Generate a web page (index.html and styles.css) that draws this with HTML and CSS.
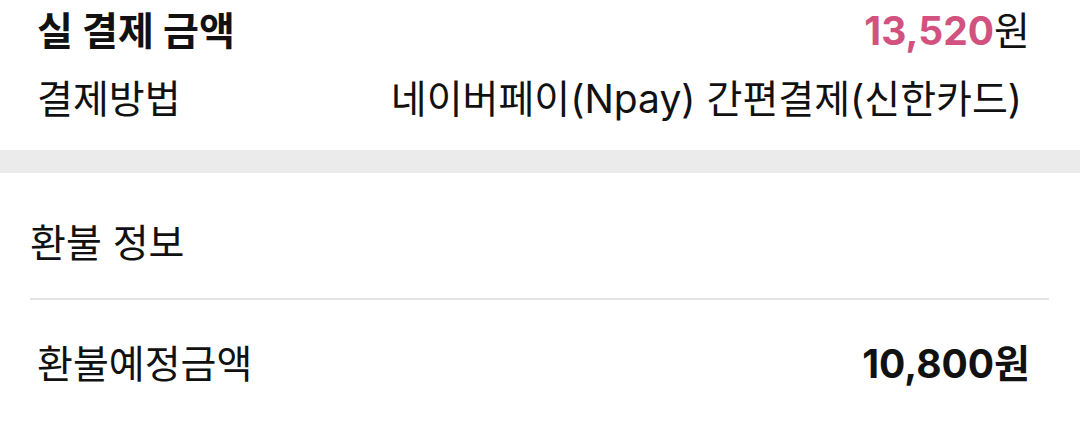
FILE: index.html
```html
<!DOCTYPE html>
<html lang="ko">
<head>
<meta charset="utf-8">
<link rel="stylesheet" href="styles.css">
</head>
<body>
<section class="pay">
  <div class="row row-total">
    <span class="label bold">실 결제 금액</span>
    <span class="value"><b class="pink">13,520</b>원</span>
  </div>
  <div class="row row-method">
    <span class="label">결제방법</span>
    <span class="value">네이버페이(Npay) 간편결제(신한카드)</span>
  </div>
</section>
<div class="band"></div>
<section class="refund">
  <h2 class="title">환불 정보</h2>
  <div class="row row-refund">
    <span class="label">환불예정금액</span>
    <span class="value bold">10,800원</span>
  </div>
</section>
</body>
</html>
```
FILE: styles.css
```css
html, body {
  margin: 0;
  padding: 0;
  background: #ffffff;
}
body {
  width: 1080px;
  height: 424px;
  overflow: hidden;
  font-family: Inter, "Noto Sans CJK KR", sans-serif;
  color: #111111;
  font-size: 39px;
}
.row {
  display: flex;
  justify-content: space-between;
  align-items: center;
}
.bold { font-weight: 700; }
.value b { font-weight: 700; }
.pink { color: #d1527f; }
.pay {
  padding: 0 50px 0 37px;
}
.row-total {
  height: 56px;
}
.row-method {
  height: 80px;
}
.row-method .value { margin-right: 8px; }
.band {
  height: 23px;
  margin-top: 14px;
  background: #ebebeb;
}
.refund {
  padding: 0 31px 0 30px;
}
.title {
  margin: 0;
  font-size: 39px;
  font-weight: 400;
  height: 127px;
  line-height: 140px;
  border-bottom: 2px solid #e4e4e4;
  box-sizing: border-box;
}
.row-refund {
  height: 122px;
  padding: 0 19px 0 7px;
}
```
